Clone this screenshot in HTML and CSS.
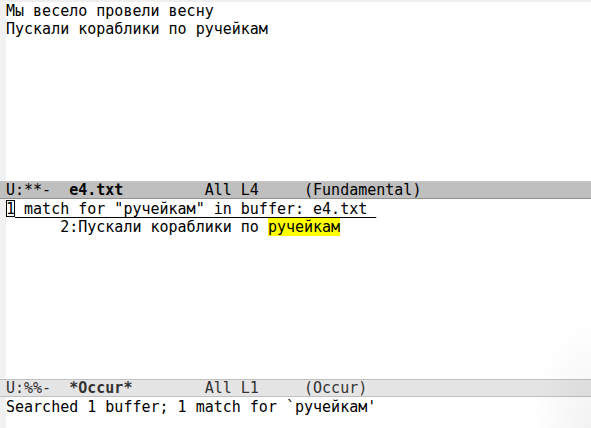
FILE: index.html
```html
<!DOCTYPE html>
<html>
<head>
<meta charset="utf-8">
<link rel="stylesheet" href="styles.css">
</head>
<body>
<div class="frame">
  <div class="window win-top">
    <div class="line">Мы весело провели весну</div>
    <div class="line">Пускали кораблики по ручейкам</div>
  </div>
  <div class="modeline active"><span class="ml">U:**-  <b>e4.txt</b>         All L4     (Fundamental)</span></div>
  <div class="window win-occur">
    <div class="line"><span class="header"><span class="cursor">1</span> match for "ручейкам" in buffer: e4.txt </span></div>
    <div class="line">      2:Пускали кораблики по <span class="match">ручейкам</span></div>
  </div>
  <div class="modeline inactive"><span class="ml">U:%%-  <b>*Occur*</b>        All L1     (Occur)</span></div>
  <div class="echo">
    <div class="line">Searched 1 buffer; 1 match for `ручейкам'</div>
  </div>
  <div class="shade"></div>
</div>
</body>
</html>
```
FILE: styles.css
```css
html, body {
  margin: 0;
  padding: 0;
  background: #ffffff;
}
body {
  width: 591px;
  height: 428px;
  overflow: hidden;
  font-family: "DejaVu Sans Mono", monospace;
  font-size: 15px;
  color: #000000;
}
.frame {
  position: relative;
  width: 591px;
  height: 428px;
  box-sizing: border-box;
  border-top: 2px solid #efefef;
  display: flex;
  flex-direction: column;
  background: #ffffff;
}
.window, .echo {
  border-left: 6px solid #f1f1f1;
  background: #ffffff;
}
.win-top {
  height: 179px;
}
.win-occur {
  height: 180px;
  padding-top: 1px;
  box-sizing: border-box;
}
.echo {
  flex: 1;
  padding-top: 1px;
}
.line {
  height: 18px;
  line-height: 18px;
  white-space: pre;
}
.modeline {
  height: 18px;
  box-sizing: border-box;
  line-height: 17px;
  padding-left: 6px;
  white-space: pre;
}
.modeline b {
  font-weight: bold;
}
.active {
  background: #bfbfbf;
  border-top: 1px solid #c8c8c8;
  border-bottom: 1px solid #8f8f8f;
}
.inactive {
  background: #e5e5e5;
  border-top: 1px solid #bfbfbf;
  border-bottom: 1px solid #bfbfbf;
  color: #333333;
}
.header {
  text-decoration: underline;
  text-underline-offset: 3px;
}
.cursor {
  outline: 1px solid #000000;
  outline-offset: -1px;
  display: inline-block;
  height: 17px;
  line-height: 18px;
  vertical-align: top;
}
.match {
  background: #ffff00;
  display: inline-block;
  height: 18px;
}
.shade {
  position: absolute;
  right: 0;
  bottom: 0;
  width: 60px;
  height: 110px;
  pointer-events: none;
  background: radial-gradient(ellipse at 100% 100%, rgba(0,0,0,0.05), rgba(0,0,0,0) 70%);
}
```
